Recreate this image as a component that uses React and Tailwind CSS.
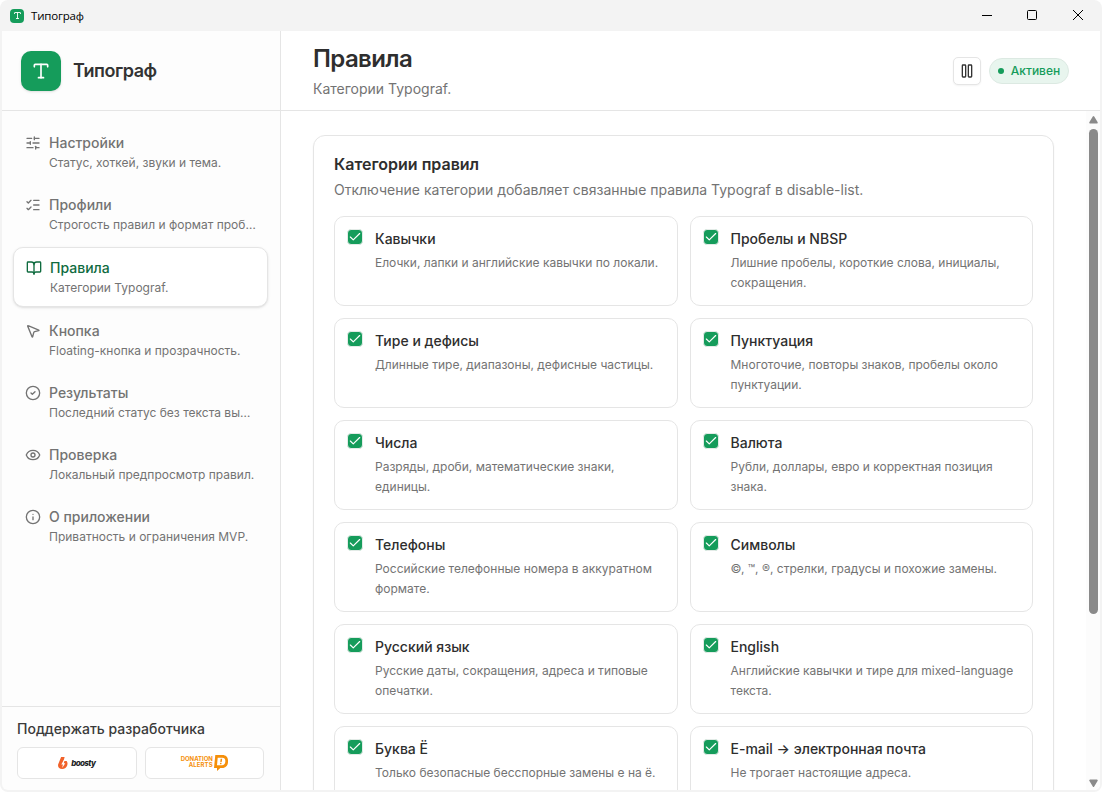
import React from 'react';
import {
  BookOpen,
  Check,
  CircleCheck,
  Eye,
  Info,
  ListChecks,
  MousePointer2,
  Pause,
  SlidersHorizontal,
  Type,
} from 'lucide-react';

const navItems = [
  { icon: SlidersHorizontal, title: 'Настройки', text: 'Статус, хоткей, звуки и тема.' },
  { icon: ListChecks, title: 'Профили', text: 'Строгость правил и формат пробелов.' },
  { icon: BookOpen, title: 'Правила', text: 'Категории Typograf.', active: true },
  { icon: MousePointer2, title: 'Кнопка', text: 'Floating-кнопка и прозрачность.' },
  { icon: CircleCheck, title: 'Результаты', text: 'Последний статус без текста выделения.' },
  { icon: Eye, title: 'Проверка', text: 'Локальный предпросмотр правил.' },
  { icon: Info, title: 'О приложении', text: 'Приватность и ограничения MVP.' },
];

const rules = [
  { title: 'Кавычки', text: 'Елочки, лапки и английские кавычки по локали.' },
  { title: 'Пробелы и NBSP', text: 'Лишние пробелы, короткие слова, инициалы, сокращения.' },
  { title: 'Тире и дефисы', text: 'Длинные тире, диапазоны, дефисные частицы.' },
  { title: 'Пунктуация', text: 'Многоточие, повторы знаков, пробелы около пунктуации.' },
  { title: 'Числа', text: 'Разряды, дроби, математические знаки, единицы.' },
  { title: 'Валюта', text: 'Рубли, доллары, евро и корректная позиция знака.' },
  { title: 'Телефоны', text: 'Российские телефонные номера в аккуратном формате.' },
  { title: 'Символы', text: '©, ™, ®, стрелки, градусы и похожие замены.' },
  { title: 'Русский язык', text: 'Русские даты, сокращения, адреса и типовые опечатки.' },
  { title: 'English', text: 'Английские кавычки и тире для mixed-language текста.' },
  { title: 'Буква Ё', text: 'Только безопасные бесспорные замены е на ё.' },
  { title: 'E-mail → электронная почта', text: 'Не трогает настоящие адреса.' },
];

function TitleBar() {
  return (
    <div className="flex h-[31px] shrink-0 items-center justify-between pl-2.5">
      <div className="flex items-center gap-[7px]">
        <span className="flex size-3.5 items-center justify-center rounded-[4px] bg-[#159c5b] text-white">
          <Type size={9} strokeWidth={2.4} />
        </span>
        <span className="font-['Open_Sans',sans-serif] text-[11.5px] leading-4 tracking-[-0.2px] text-black">
          Типограф
        </span>
      </div>
      <div className="flex items-center">
        <button className="flex h-[31px] w-[46px] items-center justify-center pb-px">
          <svg width="10" height="10" viewBox="0 0 10 10" stroke="#000" fill="none">
            <path d="M0 5.5h10" />
          </svg>
        </button>
        <button className="flex h-[31px] w-11 items-center justify-center pb-px">
          <svg width="10" height="10" viewBox="0 0 10 10" stroke="#000" fill="none">
            <rect x="0.5" y="0.5" width="9" height="9" rx="1" />
          </svg>
        </button>
        <button className="flex h-[31px] w-12 items-center justify-center pb-px">
          <svg width="10" height="10" viewBox="0 0 10 10" stroke="#000" fill="none">
            <path d="M0 0l10 10M10 0l-10 10" />
          </svg>
        </button>
      </div>
    </div>
  );
}

function NavItem({ icon: Icon, title, text, active }) {
  return (
    <button
      className={`flex items-start gap-2 rounded-[10px] px-3 pt-2.5 pb-[9px] text-left ${
        active ? 'border border-[#e5e5e5] bg-white shadow-sm' : ''
      }`}
    >
      <Icon
        size={16}
        strokeWidth={2}
        className={`mt-0.5 shrink-0 ${active ? 'text-[#0f6b3f]' : 'text-[#737373]'}`}
      />
      <span className="min-w-0 flex-1">
        <span
          className={`block text-sm leading-5 font-medium ${
            active ? 'text-[#0f6b3f]' : 'text-[#737373]'
          }`}
        >
          {title}
        </span>
        <span className="mt-px block truncate text-xs leading-[18px] text-[#737373]">{text}</span>
      </span>
    </button>
  );
}

function BoostyLogo() {
  return (
    <span className="flex items-center gap-[3px]">
      <svg width="10" height="12" viewBox="0 0 11 13">
        <path
          d="M3.4 0h3.9L6.1 4.2h3.4c1 1.2 1.2 2.9.7 4.7C9.5 11.4 7.3 13 4.6 13 1.3 13-.5 10.8.2 8z"
          fill="#f1622b"
        />
        <path d="M6.2 3.6L3.6 8.2h1.8L4.6 12l3.4-5.2H6.3l1-3.2z" fill="#fff" />
      </svg>
      <span className="text-[8px] leading-none font-extrabold tracking-[-0.6px] text-[#1d2426] italic">
        boosty
      </span>
    </span>
  );
}

function DonationAlertsLogo() {
  return (
    <span className="flex items-center gap-px text-[#f58f0a]">
      <span className="mb-px flex flex-col items-end text-[6px] leading-[6px] font-bold">
        <span className="tracking-[-0.05px]">DONATION</span>
        <span className="tracking-[0.1px]">ALERTS</span>
      </span>
      <svg width="14" height="16" viewBox="0 0 14 16" className="mt-px">
        <path
          d="M1.3 0h7.2C11.8 0 14 2.2 14 5.4v1.5C14 10.5 11.6 13 8.2 13H6.3L3 16v-3H0z"
          fill="currentColor"
        />
        <path d="M3.7 2.8h4.6C10.2 2.8 11.3 4 11.3 5.6v1c0 2.2-1.3 3.6-3.3 3.6H3z" fill="#fff" />
        <path d="M6.6 3.7h1.6l-.5 3.4H6.3zM6.1 7.8h1.5l-.2 1.5H5.9z" fill="currentColor" />
      </svg>
    </span>
  );
}

function Sidebar() {
  return (
    <aside className="flex w-[279px] shrink-0 flex-col border-r border-[#e5e5e5]">
      <div className="flex h-20 shrink-0 items-center gap-3 border-b border-[#e5e5e5] pl-[19px]">
        <span className="flex size-10 items-center justify-center rounded-[10px] bg-[#159c5b] text-white shadow-sm">
          <Type size={20} />
        </span>
        <span className="text-lg font-semibold tracking-tight text-[#333]">Типограф</span>
      </div>
      <nav className="flex flex-1 flex-col gap-1 pt-3 pr-3 pl-[11px]">
        {navItems.map((item) => (
          <NavItem key={item.title} {...item} />
        ))}
      </nav>
      <div className="h-[84px] shrink-0 border-t border-[#e5e5e5] pt-3 pr-4 pl-[15px]">
        <div className="text-sm leading-5 font-medium text-[#3a3a3a]">Поддержать разработчика</div>
        <div className="mt-2 grid grid-cols-2 gap-2">
          <a className="flex h-8 items-center justify-center rounded-md border border-[#e5e5e5] bg-white pb-px">
            <BoostyLogo />
          </a>
          <a className="flex h-8 items-center justify-center rounded-md border border-[#e5e5e5] bg-white pb-px">
            <DonationAlertsLogo />
          </a>
        </div>
      </div>
    </aside>
  );
}

function Header() {
  return (
    <header className="flex h-20 shrink-0 items-center justify-between border-b border-[#e5e5e5] pr-[31px] pl-8">
      <div>
        <h1 className="text-2xl leading-8 font-semibold tracking-tight text-[#2e2e2e]">Правила</h1>
        <p className="mt-1 text-sm leading-5 text-[#737373]">Категории Typograf.</p>
      </div>
      <div className="flex items-center gap-2">
        <button className="flex size-7 items-center justify-center rounded-[5px] border border-[#e5e5e5] bg-white text-[#333] shadow-xs">
          <Pause size={16} strokeWidth={2} />
        </button>
        <span className="flex h-[26px] w-20 items-center justify-center gap-[7px] rounded-full border border-[#dce9e2] bg-[#e8f5ee] text-xs font-medium text-[#159c5b]">
          <span className="size-1.5 rounded-full bg-[#159c5b]" />
          Активен
        </span>
      </div>
    </header>
  );
}

function RuleCard({ title, text }) {
  return (
    <label className="flex h-[90px] items-start gap-3 rounded-[10px] border border-[#e5e5e5] px-3 pt-3">
      <span className="flex size-4 shrink-0 items-center justify-center rounded-[4px] border border-[#e3ebe7] bg-[#159c5b] text-white">
        <Check size={14} strokeWidth={2} className="shrink-0" />
      </span>
      <span className="min-w-0 flex-1">
        <span className="block text-sm leading-5 font-medium text-[#2e2e2e]">{title}</span>
        <span className="mt-1 block text-xs leading-5 text-[#737373]">{text}</span>
      </span>
    </label>
  );
}

function Scrollbar() {
  return (
    <div className="flex w-3.5 shrink-0 flex-col items-center bg-[#fcfcfc] pt-[5px] pb-[3px]">
      <svg width="9" height="8" viewBox="0 0 10 8" preserveAspectRatio="none" fill="#8a8a8a">
        <path d="M4.2.6a1 1 0 0 1 1.6 0l3.7 5.3a1 1 0 0 1-.8 1.6H1.3a1 1 0 0 1-.8-1.6z" />
      </svg>
      <div className="mt-[5px] h-[485px] w-[9px] rounded-full bg-[#8a8a8a]" />
      <svg
        className="mt-auto"
        width="9"
        height="8"
        viewBox="0 0 10 8"
        preserveAspectRatio="none"
        fill="#8a8a8a"
      >
        <path d="M4.2 7.4a1 1 0 0 0 1.6 0l3.7-5.3a1 1 0 0 0-.8-1.6H1.3a1 1 0 0 0-.8 1.6z" />
      </svg>
    </div>
  );
}

export default function App() {
  return (
    <div className="h-[792px] w-[1102px] overflow-hidden bg-white font-['Inter',sans-serif]">
      <div className="flex h-full flex-col overflow-hidden rounded-lg bg-[#f3f3f3] pb-0.5">
        <TitleBar />
        <div className="mx-0.5 flex min-h-0 flex-1 overflow-hidden rounded-b-md bg-[#fdfdfd]">
          <Sidebar />
          <div className="flex min-w-0 flex-1 flex-col bg-white">
            <Header />
            <div className="flex min-h-0 flex-1">
              <main className="min-w-0 flex-1 overflow-hidden pt-6 pr-8 pl-8">
                <section className="rounded-xl border border-[#e5e5e5] bg-white p-5 shadow-xs">
                  <h2 className="text-base leading-4 font-semibold text-[#2e2e2e]">
                    Категории правил
                  </h2>
                  <p className="mt-2 text-sm leading-5 text-[#737373]">
                    Отключение категории добавляет связанные правила Typograf в disable-list.
                  </p>
                  <div className="mt-4 grid grid-cols-2 gap-3">
                    {rules.map((rule) => (
                      <RuleCard key={rule.title} {...rule} />
                    ))}
                  </div>
                </section>
              </main>
              <Scrollbar />
            </div>
          </div>
        </div>
      </div>
    </div>
  );
}
